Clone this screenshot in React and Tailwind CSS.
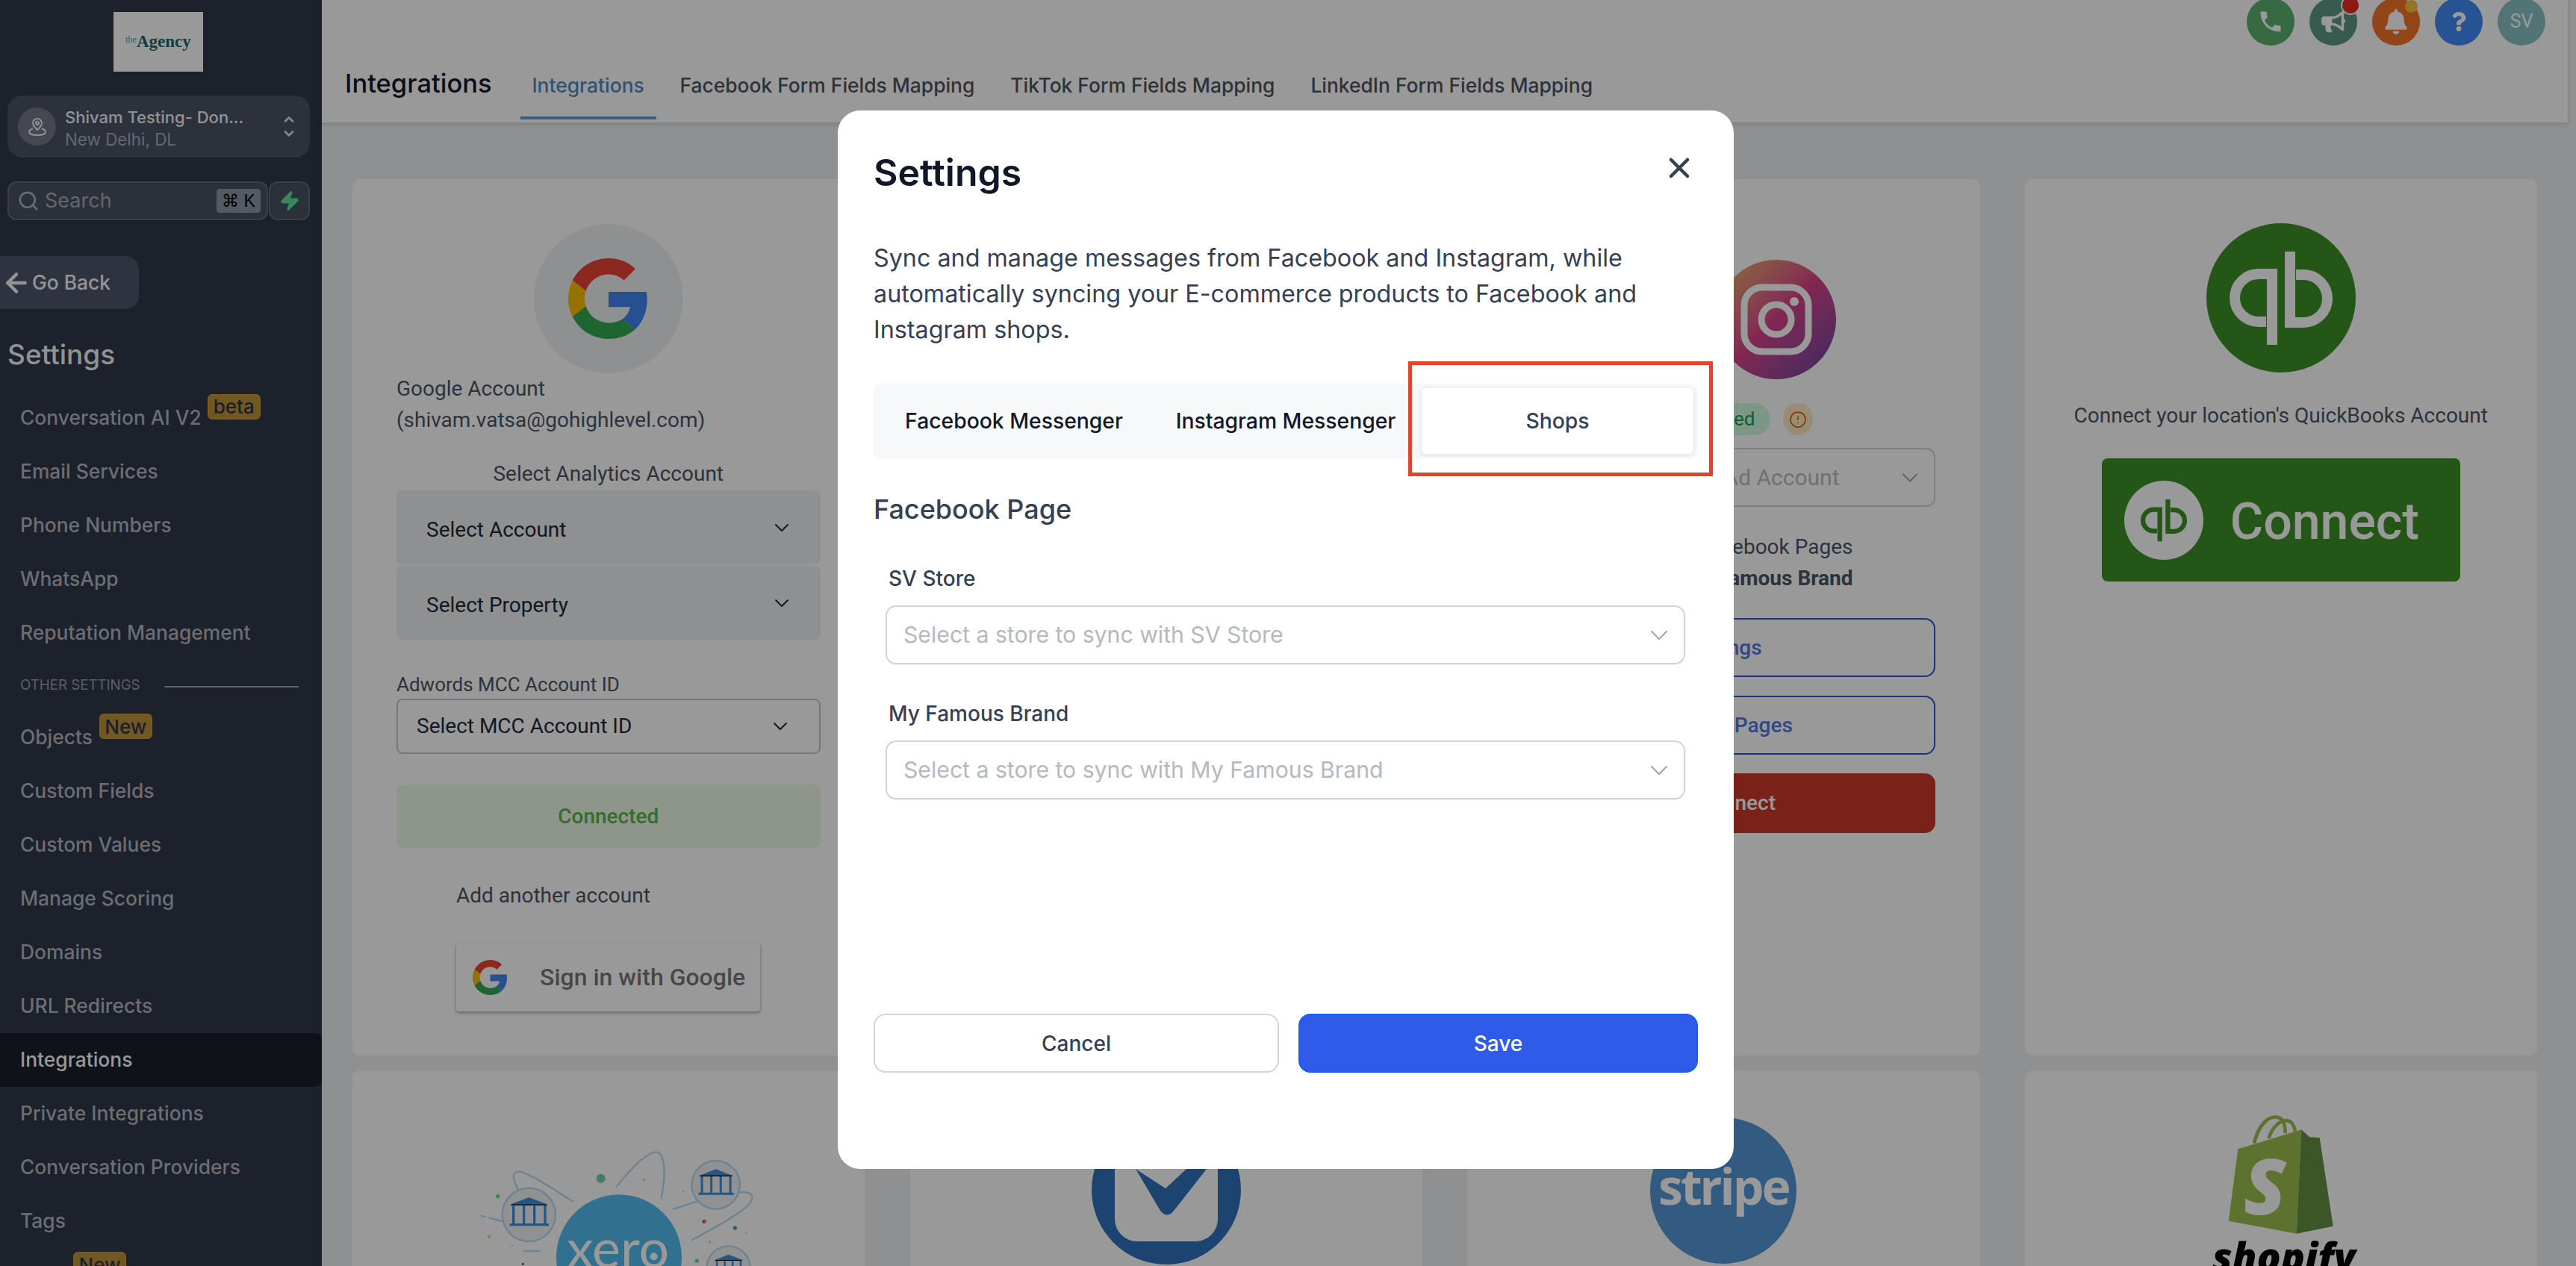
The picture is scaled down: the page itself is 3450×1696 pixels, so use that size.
import { ArrowLeft, ChevronDown, ChevronUp, CircleAlert, Search, X, Zap } from 'lucide-react'
import { FaBell, FaBullhorn, FaQuestion } from 'react-icons/fa'
import { MdPhone } from 'react-icons/md'

const NAV_TOP = ['Email Services', 'Phone Numbers', 'WhatsApp', 'Reputation Management']
const NAV_BOTTOM = ['Custom Fields', 'Custom Values', 'Manage Scoring', 'Domains', 'URL Redirects']
const NAV_LAST = ['Private Integrations', 'Conversation Providers', 'Tags']
const TABS = ['Facebook Form Fields Mapping', 'TikTok Form Fields Mapping', 'LinkedIn Form Fields Mapping']

function Badge({ children, className }) {
  return (
    <span className={`flex h-[34px] w-[71px] shrink-0 items-center justify-center rounded-[6px] border-2 border-[#c9992f] bg-[#bd9238] text-[26px] font-medium text-[#2a3550] ${className}`}>
      {children}
    </span>
  )
}

function NavItem({ label }) {
  return <div className="flex h-[72px] shrink-0 items-center pl-[27px] text-[26.4px] font-medium text-[#b4b8c2]">{label}</div>
}

function Sidebar() {
  return (
    <aside className="flex h-full w-[431px] shrink-0 flex-col overflow-hidden bg-[#2f3748] font-['Inter']">
      <div className="ml-[152px] mt-[16px] flex h-[80px] w-[120px] shrink-0 items-center justify-center bg-white font-['Liberation_Serif'] text-[#1c6670]">
        <span className="mb-[6px] text-[12px] text-[#4aa39c]">the</span>
        <span className="text-[23px] font-bold">Agency</span>
      </div>

      <div className="ml-[10px] mr-[16px] mt-[32px] flex h-[83px] shrink-0 items-center rounded-[20px] bg-[#4b5264] pl-[14px] pr-[18px]">
        <div className="flex h-[51px] w-[51px] shrink-0 items-center justify-center rounded-full bg-[#747886]">
          <svg width="26" height="26" viewBox="0 0 26 26" fill="none" stroke="#f2f3f5" strokeWidth="2">
            <path d="M13 17c-3-3-6-5.500-6-9a6 6 0 0 1 12 0c0 3.500-3 6-6 9z" />
            <circle cx="13" cy="8" r="2" />
            <path d="M7 15.500c-3 1-5 2.500-5 4.500 0 2.500 5 4 11 4s11-1.500 11-4c0-2-2-3.500-5-4.500" />
          </svg>
        </div>
        <div className="ml-[12px] mt-[5px] flex-1 leading-[30px]">
          <div className="text-[22px] font-medium text-[#f5f5f5]">Shivam Testing- Don...</div>
          <div className="text-[22.4px] text-[#a7adbb]">New Delhi, DL</div>
        </div>
        <div className="flex flex-col text-[#e5e7eb]">
          <ChevronUp size={20} strokeWidth={3} className="-mb-[1px]" />
          <ChevronDown size={20} strokeWidth={3} />
        </div>
      </div>

      <div className="ml-[10px] mr-[16px] mt-[32px] flex h-[52px] shrink-0 gap-[1px]">
        <div className="flex flex-1 items-center rounded-[12px] border-2 border-[#646976] bg-[#4a505f] pl-[11px] pr-[8px]">
          <Search size={30} strokeWidth={2.2} className="text-[#aab0bb]" />
          <span className="ml-[7px] flex-1 text-[27px] text-[#a7adb9]">Search</span>
          <span className="flex h-[32px] w-[59px] items-center justify-center rounded-[4px] bg-[#8e95a5] font-['Liberation_Sans'] text-[23px] text-black">
            ⌘ K
          </span>
        </div>
        <div className="flex w-[55px] items-center justify-center rounded-[12px] border-2 border-[#646976] bg-[#4a505f]">
          <Zap size={28} className="fill-[#5ce196] text-[#5ce196]" />
        </div>
      </div>

      <div className="mt-[48px] flex h-[71px] w-[186px] shrink-0 items-center rounded-r-[18px] bg-[#4e5569] pl-[2px] text-[#f7f7f7]">
        <ArrowLeft size={40} strokeWidth={2.7} />
        <span className="ml-[1px] text-[26.4px] font-medium">Go Back</span>
      </div>

      <div className="mt-[36px] flex h-[50px] shrink-0 items-center pl-[10px] text-[37px] font-medium text-[#f3f3f3]">Settings</div>

      <div className="mt-[24px] flex h-[72px] shrink-0 items-center pl-[27px] text-[26.4px] font-medium text-[#b4b8c2]">
        Conversation AI V2
        <Badge className="ml-[8px] -mt-[31px]">beta</Badge>
      </div>
      {NAV_TOP.map((label) => <NavItem key={label} label={label} />)}

      <div className="flex h-[68px] shrink-0 items-center pl-[27px]">
        <span className="text-[18.7px] text-[#9a9fac]">OTHER SETTINGS</span>
        <div className="ml-[32px] mt-[3px] h-[2px] w-[180px] bg-[#a0a4ae]" />
      </div>

      <div className="flex h-[72px] shrink-0 items-center pl-[27px] text-[26.4px] font-medium text-[#b4b8c2]">
        Objects
        <Badge className="ml-[9px] -mt-[30px]">New</Badge>
      </div>
      {NAV_BOTTOM.map((label) => <NavItem key={label} label={label} />)}
      <div className="flex h-[72px] shrink-0 items-center rounded-r-[8px] bg-[#191e2b] pl-[27px] text-[26.4px] font-medium text-white">Integrations</div>
      {NAV_LAST.map((label) => <NavItem key={label} label={label} />)}
      <Badge className="ml-[98px] mt-[5px]">New</Badge>
    </aside>
  )
}

function TopIcon({ className, children, dot }) {
  return (
    <div className={`relative flex h-[64px] w-[64px] items-center justify-center rounded-full text-white ${className}`}>
      {children}
      {dot}
    </div>
  )
}

function Header() {
  return (
    <header className="relative h-[164px] shrink-0 bg-white pl-[31px] pr-[30px] shadow-[0_2px_8px_rgba(0,0,0,0.15)]">
      <div className="-mt-[3px] flex justify-end gap-[20px]">
        <TopIcon className="bg-[#5cb16e]"><MdPhone size={36} /></TopIcon>
        <TopIcon
          className="bg-[#5c9882]"
          dot={<span className="absolute -top-[3px] left-[42px] h-[26px] w-[26px] rounded-full border-2 border-white bg-[#e92a21]" />}
        >
          <FaBullhorn size={32} />
        </TopIcon>
        <TopIcon
          className="bg-[#f3732b]"
          dot={<span className="absolute top-[3px] left-[44px] h-[17px] w-[17px] rounded-full bg-[#fbc23f]" />}
        >
          <FaBell size={34} />
        </TopIcon>
        <TopIcon className="bg-[#4189f5]"><FaQuestion size={26} /></TopIcon>
        <TopIcon className="bg-[#89c1c1] font-['Roboto'] text-[25px]">SV</TopIcon>
      </div>
      <div className="mt-[5px] flex items-center font-['Inter']">
        <h1 className="-mt-[2px] text-[34.5px] font-medium text-[#111827]">Integrations</h1>
        <div className="relative ml-[38px] flex h-[94px] w-[182px] items-center justify-center pt-[4px] text-[26.4px] font-medium text-[#4d8bc4]">
          Integrations
          <span className="absolute bottom-0 left-0 h-[4px] w-full bg-[#5f9dd2]" />
        </div>
        <div className="ml-[32px] mt-[4px] flex gap-[48px]">
          {TABS.map((tab) => (
            <span key={tab} className="text-[26.4px] font-medium text-[#4b5261]">{tab}</span>
          ))}
        </div>
      </div>
    </header>
  )
}

function GoogleG({ size }) {
  return (
    <svg width={size} height={size} viewBox="0 0 48 48">
      <path fill="#EA4335" d="M24 9.500c3.540 0 6.710 1.220 9.210 3.600l6.850-6.850C35.900 2.380 30.470 0 24 0 14.620 0 6.510 5.380 2.560 13.220l7.980 6.190C12.430 13.720 17.740 9.500 24 9.500z" />
      <path fill="#4285F4" d="M46.980 24.550c0-1.570-.15-3.090-.38-4.550H24v9.020h12.940c-.58 2.960-2.260 5.480-4.780 7.180l7.730 6c4.510-4.180 7.090-10.360 7.090-17.650z" />
      <path fill="#FBBC05" d="M10.530 28.590c-.48-1.450-.76-2.990-.76-4.590s.27-3.140.76-4.590l-7.980-6.190C.92 16.460 0 20.120 0 24c0 3.880.92 7.540 2.560 10.780l7.970-6.190z" />
      <path fill="#34A853" d="M24 48c6.480 0 11.930-2.130 15.890-5.810l-7.730-6c-2.150 1.450-4.920 2.300-8.160 2.300-6.260 0-11.570-4.220-13.470-9.910l-7.980 6.190C6.510 42.620 14.620 48 24 48z" />
    </svg>
  )
}

function QbMark({ size, color }) {
  return (
    <svg width={size} height={size} viewBox="0 0 200 200" fill="none" stroke={color} strokeWidth="14">
      <path d="M88 163V68H70a32 32 0 0 0 0 64h10" />
      <path d="M112 38v95h18a32 32 0 0 0 0-64h-10" />
    </svg>
  )
}

function GoogleCard() {
  return (
    <div className="flex h-[1174px] flex-col rounded-[10px] bg-white pl-[59px] pr-[60px] pt-[60px] font-['Roboto'] text-[#1f2937]">
      <div className="mx-auto flex h-[200px] w-[200px] shrink-0 items-center justify-center rounded-full bg-[#edf0f3]">
        <GoogleG size={108} />
      </div>
      <p className="text-[28px] leading-[42px] text-[#4b5563]">
        Google Account
        <br />
        (shivam.vatsa@gohighlevel.com)
      </p>
      <p className="mt-[30px] text-center text-[28px] leading-[42px] text-[#4b5563]">Select Analytics Account</p>
      <div className="mt-[1px] flex h-[99px] items-center justify-between rounded-[8px] bg-[#edf0f3] pl-[40px] pr-[36px] text-[28px]">
        <span className="mt-[6px]">Select Account</span>
        <ChevronDown size={32} strokeWidth={1.5} />
      </div>
      <div className="mt-[2px] flex h-[99px] items-center justify-between rounded-[8px] bg-[#edf0f3] pl-[40px] pr-[36px] text-[28px]">
        <span className="mt-[6px]">Select Property</span>
        <ChevronDown size={32} strokeWidth={1.5} />
      </div>
      <p className="mt-[42px] text-[26px] leading-[36px] text-[#4b5563]">Adwords MCC Account ID</p>
      <div className="mt-px flex h-[74px] items-center justify-between rounded-[8px] border-2 border-[#c3c7cd] pl-[25px] pr-[36px] text-[28px]">
        Select MCC Account ID
        <ChevronDown size={32} strokeWidth={1.5} />
      </div>
      <div className="mt-[41px] flex h-[85px] items-center justify-center rounded-[8px] bg-[#edfae9] text-[28px] font-medium text-[#5cb44a]">
        Connected
      </div>
      <p className="ml-[80px] mt-[43px] text-[28px] leading-[42px] text-[#4b5563]">Add another account</p>
      <div className="ml-[80px] mt-[42px] flex h-[92px] w-[407px] items-center rounded-[4px] bg-white pl-[22px] shadow-[0_2px_4px_rgba(0,0,0,0.35)]">
        <GoogleG size={47} />
        <span className="ml-[43px] text-[32px] font-medium text-black/55">Sign in with Google</span>
      </div>
    </div>
  )
}

function InstagramCard() {
  return (
    <div className="flex h-[1174px] flex-col rounded-[10px] bg-white pl-[59px] pr-[60px] pt-[108px] font-['Roboto']">
      <div className="ml-[275px] flex h-[160px] w-[160px] items-center justify-center rounded-full bg-linear-to-br from-[#e8b858] via-[#d8408a] to-[#5f3f9f]">
        <svg width="100" height="100" viewBox="0 0 100 100" fill="none" stroke="white" strokeWidth="9">
          <rect x="7" y="7" width="86" height="86" rx="24" />
          <circle cx="50" cy="50" r="20" />
          <circle cx="74" cy="26" r="6" fill="white" stroke="none" />
        </svg>
      </div>
      <div className="mt-[32px] flex justify-end gap-[17px] pr-[164px]">
        <span className="flex h-[43px] items-center rounded-full bg-[#d1fadf] px-[20px] text-[26px] text-[#12a150]">Connected</span>
        <span className="flex h-[43px] w-[40px] items-center justify-center rounded-full bg-[#fde9c7] text-[#dc6803]">
          <CircleAlert size={24} strokeWidth={1.75} />
        </span>
      </div>
      <div className="mt-[17px] flex h-[79px] items-center justify-end rounded-[12px] border-2 border-[#d0d5dd] pr-[14px] text-[30px] text-[#b8bcc3]">
        <span className="mr-[76px]">Select Ad Account</span>
        <ChevronDown size={36} strokeWidth={1.4} className="text-[#a0a4ab]" />
      </div>
      <div className="mt-[33px] pr-[110px] text-right text-[28px] leading-[42px] text-[#4b5563]">
        Connected Facebook Pages
        <br />
        <span className="font-bold">My Famous Brand</span>
      </div>
      <div className="mt-[32px] flex h-[79px] items-center justify-center rounded-[14px] border-2 border-[#2f55d4] text-[28px] font-medium text-[#4f7ae0]">Settings</div>
      <div className="mt-[25px] flex h-[79px] items-center justify-center rounded-[14px] border-2 border-[#2f55d4] text-[28px] font-medium text-[#4f7ae0]">Manage Pages</div>
      <div className="mt-[25px] flex h-[80px] items-center justify-center rounded-[14px] bg-[#cc3a2a] text-[28px] font-medium text-white">Disconnect</div>
    </div>
  )
}

function QuickBooksCard() {
  return (
    <div className="flex h-[1174px] flex-col items-center rounded-[10px] bg-white pt-[59px] font-['Roboto']">
      <div className="flex h-[200px] w-[200px] items-center justify-center rounded-full bg-[#3d8f28]">
        <QbMark size={200} color="white" />
      </div>
      <p className="mt-[37px] text-[28px] leading-[42px] text-[#4b5563]">Connect your location's QuickBooks Account</p>
      <div className="mt-[36px] flex h-[165px] w-[480px] items-center rounded-[8px] bg-[#3d8f28] pl-[30px]">
        <div className="flex h-[106px] w-[106px] items-center justify-center rounded-full bg-white">
          <QbMark size={90} color="#3d8f28" />
        </div>
        <span className="ml-[36px] mt-[4px] text-[68px] font-medium text-white">Connect</span>
      </div>
    </div>
  )
}

function Bank({ x, y, r, s }) {
  return (
    <g transform={`translate(${x} ${y})`}>
      <circle r={r} fill="#f0f2f6" stroke="#b4dcf2" strokeWidth="7" />
      <g transform={`scale(${s})`}>
        <path d="M-72 -42 L0 -70 L73 -42Z" fill="#3f8ee0" />
        <path d="M-72 -40H73" stroke="#111" strokeWidth="5" />
        <path d="M-62 -38V38M-20 -38V38M22 -38V38M65 -38V38" stroke="#3f8ee0" strokeWidth="10" />
        <path d="M-77 40H80" stroke="#3f8ee0" strokeWidth="10" />
      </g>
    </g>
  )
}

function XeroArt() {
  return (
    <svg width="420" height="176" viewBox="0 0 1260 528" fill="none">
      <g stroke="#b4dcf2" strokeWidth="7" strokeLinecap="round">
        <path d="M222 220C205 190 190 150 225 148C270 155 380 230 440 268" />
        <path d="M617 209C680 130 740 70 778 70C815 75 815 170 797 255" />
        <path d="M846 299L940 268" />
        <path d="M1110 232C1170 225 1175 255 1140 290C1080 340 990 385 922 423" />
        <path d="M105 335L158 348M74 326L88 330" />
        <path d="M245 468H306" />
      </g>
      <Bank x={265} y={322} r={107} s={1} />
      <Bank x={1016} y={202} r={97} s={0.9} />
      <Bank x={1067} y={535} r={87} s={0.75} />
      <circle cx="554" cy="176" r="18" fill="#6bd3a0" />
      <circle cx="140" cy="248" r="8" fill="#6bd3a0" />
      <circle cx="940" cy="507" r="8" fill="#6bd3a0" />
      <circle cx="727" cy="181" r="4" fill="#f6c23a" />
      <circle cx="105" cy="410" r="6" fill="#f6c23a" />
      <circle cx="969" cy="349" r="8" fill="#e35d6a" />
      <circle cx="1093" cy="375" r="8" fill="#3f9fdc" />
      <circle cx="885" cy="226" r="4" fill="#b4dcf2" />
      <circle cx="1137" cy="396" r="4" fill="#b4dcf2" />
      <circle cx="991" cy="432" r="5" fill="#b4dcf2" />
      <circle cx="198" cy="447" r="4" fill="#b4dcf2" />
      <circle cx="241" cy="520" r="4" fill="#223" />
      <circle cx="627" cy="493" r="252" fill="#54bbf1" />
      <text x="417" y="534" fontFamily="Lato" fontSize="215" fill="white">xero</text>
      <circle cx="767" cy="490" r="15" fill="white" />
    </svg>
  )
}

function ShopifyBag() {
  return (
    <svg width="220" height="176" viewBox="0 0 660 528" fill="none">
      <path d="M210 155C225 90 260 45 300 50C325 50 335 80 335 115" stroke="#9dbf4f" strokeWidth="14" />
      <path d="M268 135C285 85 320 55 350 65C365 72 372 90 375 108" stroke="#9dbf4f" strokeWidth="14" />
      <path d="M145 178L400 100L380 518L107 467Z" fill="#9dbf4f" />
      <path d="M400 100L432 130L473 133L527 488L380 518Z" fill="#668f43" />
      <text x="168" y="440" fontFamily="Open Sans" fontWeight="800" fontStyle="italic" fontSize="310" fill="white">S</text>
    </svg>
  )
}

function LogoCard({ children, className }) {
  return <div className={`flex h-[600px] flex-col items-center rounded-[10px] bg-white ${className}`}>{children}</div>
}

function Cards() {
  return (
    <div className="grid grid-cols-4 gap-x-[60px] gap-y-[20px] px-[41px] pt-[76px]">
      <GoogleCard />
      <div className="h-[1174px] rounded-[10px] bg-white" />
      <InstagramCard />
      <QuickBooksCard />

      <LogoCard className="pl-[30px] pt-[86px]">
        <XeroArt />
      </LogoCard>
      <LogoCard className="pt-[60px]">
        <svg width="200" height="200" viewBox="0 0 200 200">
          <circle cx="100" cy="100" r="100" fill="#3171bb" />
          <rect x="31" y="31" width="138" height="138" rx="30" fill="white" />
          <path d="M59 72L99 98L127 72H154L110 128Q101 139 92 128Z" fill="#3171bb" />
        </svg>
      </LogoCard>
      <LogoCard className="pt-[63px]">
        <div className="flex h-[196px] w-[196px] items-center justify-center rounded-full bg-[#5596d5]">
          <span className="mb-[14px] font-['Open_Sans'] text-[66px] font-bold tracking-[-3px] text-white">stripe</span>
        </div>
      </LogoCard>
      <LogoCard className="pl-[8px] pt-[46px]">
        <ShopifyBag />
        <span className="-mt-[8px] font-['Open_Sans'] text-[53px] font-extrabold italic leading-[70px] text-black">shopify</span>
      </LogoCard>
    </div>
  )
}

function StoreSelect({ label }) {
  return (
    <div className="mt-[16px] ml-[16px] flex h-[79px] w-[1071px] items-center justify-between rounded-[14px] border-2 border-[#d0d5dd] pl-[22px] pr-[13px] text-[30.2px] text-[#b4b8c0] shadow-[0_1px_2px_rgba(16,24,40,0.05)]">
      {label}
      <ChevronDown size={40} strokeWidth={1.3} className="text-[#a0a6b0]" />
    </div>
  )
}

function SettingsModal() {
  return (
    <div className="absolute left-[1122px] top-[148px] flex h-[1418px] w-[1200px] flex-col rounded-[30px] bg-white px-[48px] pb-[129px] pt-[53px] font-['Inter'] text-[#344054]">
      <div className="flex items-start justify-between">
        <h2 className="text-[50px] font-semibold leading-[60px] text-[#101828]">Settings</h2>
        <X size={44} strokeWidth={2.5} className="mr-[3px] mt-[2px] text-[#344054]" />
      </div>
      <p className="mt-[61px] text-[32.3px] leading-[48px]">
        Sync and manage messages from Facebook and Instagram, while automatically syncing your E-commerce products to Facebook and Instagram shops.
      </p>
      <div className="mt-[48px] grid h-[100px] grid-cols-3 rounded-[8px] bg-[#f7f8fa] p-[6px] text-[28.3px] font-medium">
        <div className="flex items-center justify-center text-[#101828]">Facebook Messenger</div>
        <div className="flex items-center justify-center text-[#101828]">Instagram Messenger</div>
        <div className="flex items-center justify-center rounded-[6px] bg-white shadow-[0_1px_6px_rgba(16,24,40,0.12)]">Shops</div>
      </div>
      <h3 className="mt-[43px] text-[36px] font-medium leading-[50px]">Facebook Page</h3>
      <p className="ml-[20px] mt-[48px] text-[28px] font-medium leading-[40px]">SV Store</p>
      <StoreSelect label="Select a store to sync with SV Store" />
      <p className="ml-[20px] mt-[46px] text-[28px] font-medium leading-[40px]">My Famous Brand</p>
      <StoreSelect label="Select a store to sync with My Famous Brand" />
      <div className="mt-auto flex gap-[26px] text-[28px] font-medium">
        <button className="h-[79px] w-[543px] rounded-[16px] border-2 border-[#d0d5dd] bg-white">Cancel</button>
        <button className="h-[79px] flex-1 rounded-[16px] border-2 border-[#155eef] bg-[#2f5be8] text-white">Save</button>
      </div>
      {/* annotation box drawn on the screenshot */}
      <div className="absolute left-[764px] top-[336px] h-[154px] w-[408px] border-[5px] border-[#e8432a]" />
    </div>
  )
}

export default function App() {
  return (
    <div className="relative flex h-[1696px] w-[3450px] overflow-hidden bg-[#edf0f3]">
      <Sidebar />
      <main className="mr-[11px] flex min-w-0 flex-1 flex-col">
        <Header />
        <Cards />
      </main>
      <div className="absolute inset-0 bg-black/40" />
      <SettingsModal />
    </div>
  )
}
